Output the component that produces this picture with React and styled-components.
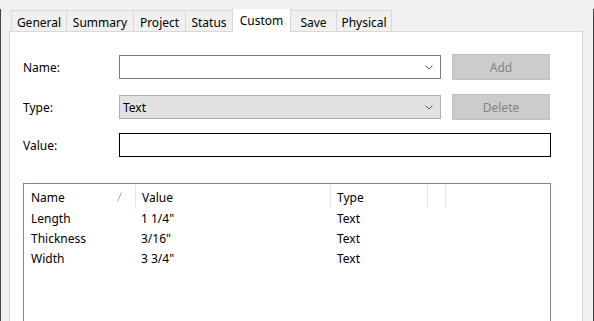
import React from 'react';
import styled, { createGlobalStyle } from 'styled-components';

const GlobalStyle = createGlobalStyle`
  html, body {
    margin: 0;
    padding: 0;
    background: #f0f0f0;
  }
  body {
    font-family: "Noto Sans", "Open Sans", sans-serif;
    font-size: 12px;
    color: #000;
    overflow: hidden;
  }
`;

const Frame = styled.div`
  box-sizing: border-box;
  width: 594px;
  height: 312px;
  margin-top: 9px;
  padding: 0 10px 0 8px;
  border-left: 1px solid #444;
  border-right: 1px solid #444;
  display: flex;
  flex-direction: column;
  overflow: hidden;
`;

const TabStrip = styled.div`
  display: flex;
  align-items: flex-end;
  height: 23px;
  margin-top: -1px;
  padding-left: 2px;
  flex-shrink: 0;
`;

const Tab = styled.div`
  box-sizing: border-box;
  width: ${p => p.w}px;
  height: ${p => (p.active ? 24 : 21)}px;
  margin-left: -1px;
  margin-bottom: ${p => (p.active ? -1 : 0)}px;
  padding-top: 4px;
  line-height: 16px;
  text-align: center;
  border: 1px solid #d9d9d9;
  border-bottom: none;
  background: ${p => (p.active ? '#fff' : '#f0f0f0')};
  position: relative;
  z-index: ${p => (p.active ? 2 : 0)};
  &:first-child {
    margin-left: 0;
  }
`;

const Panel = styled.div`
  flex: 1;
  display: flex;
  flex-direction: column;
  background: #fff;
  border: 1px solid #d9d9d9;
  padding: 22px 0 0 13px;
  position: relative;
  z-index: 1;
`;

const Row = styled.div`
  display: flex;
  align-items: center;
  height: 26px;
  margin-top: ${p => p.mt || 0}px;
`;

const Label = styled.div`
  width: 96px;
  line-height: 16px;
  padding-top: 2px;
`;

const Combo = styled.div`
  box-sizing: border-box;
  width: 322px;
  height: 24px;
  display: flex;
  align-items: center;
  padding: 0 7px 0 3px;
  border: 1px solid ${p => (p.filled ? '#adadad' : '#7a7a7a')};
  background: ${p => (p.filled ? '#e1e1e1' : '#fff')};
  line-height: 16px;
  span {
    flex: 1;
    padding-top: 2px;
  }
`;

const Button = styled.div`
  box-sizing: border-box;
  width: 98px;
  height: 26px;
  margin-left: 11px;
  padding-top: 1px;
  display: flex;
  align-items: center;
  justify-content: center;
  background: #cccccc;
  border: 1px solid #bfbfbf;
  color: #838383;
`;

const TextBox = styled.div`
  box-sizing: border-box;
  width: 432px;
  height: 24px;
  border: 1px solid #000;
  background: #fff;
`;

const ListView = styled.div`
  box-sizing: border-box;
  width: 528px;
  height: 200px;
  margin-top: 25px;
  border: 1px solid #828790;
  background: #fff;
`;

const cols = '112px 195px 97px 18px 1fr';

const Header = styled.div`
  display: grid;
  grid-template-columns: ${cols};
  height: 24px;
`;

const HeadCell = styled.div`
  box-sizing: border-box;
  padding: 6px 0 0 ${p => p.pl || 6}px;
  border-right: ${p => (p.last ? 'none' : '1px solid #e5e5e5')};
  line-height: 16px;
  position: relative;
`;

const SortMark = styled.svg`
  position: absolute;
  right: 13px;
  top: 8px;
`;

const ItemRow = styled.div`
  display: grid;
  grid-template-columns: ${cols};
  height: 20px;
  align-items: center;
  line-height: 16px;
  &:first-of-type {
    margin-top: 2px;
  }
`;

const Cell = styled.div`
  padding: 1px 0 0 ${p => p.pl || 6}px;
`;

const Chevron = () => (
  <svg width="8" height="5" viewBox="0 0 8 5">
    <path d="M0.5 0.5 L4 4 L7.5 0.5" fill="none" stroke="#5a5a5a" strokeWidth="1" />
  </svg>
);

const tabs = [
  ['General', 56],
  ['Summary', 68],
  ['Project', 53],
  ['Status', 48],
  ['Custom', 59],
  ['Save', 47],
  ['Physical', 56],
];

const items = [
  ['Length', '1 1/4"', 'Text'],
  ['Thickness', '3/16"', 'Text'],
  ['Width', '3 3/4"', 'Text'],
];

export default function App() {
  return (
    <>
      <GlobalStyle />
      <Frame>
        <TabStrip>
          {tabs.map(([name, w]) => (
            <Tab key={name} w={w} active={name === 'Custom'}>
              {name}
            </Tab>
          ))}
        </TabStrip>
        <Panel>
          <Row>
            <Label>Name:</Label>
            <Combo>
              <span />
              <Chevron />
            </Combo>
            <Button>Add</Button>
          </Row>
          <Row mt={14}>
            <Label>Type:</Label>
            <Combo filled>
              <span>Text</span>
              <Chevron />
            </Combo>
            <Button>Delete</Button>
          </Row>
          <Row mt={12}>
            <Label>Value:</Label>
            <TextBox />
          </Row>
          <ListView>
            <Header>
              <HeadCell pl={7}>
                Name
                <SortMark width="5" height="10" viewBox="0 0 5 10">
                  <path d="M4.5 0.5 L0.5 9.5" stroke="#a8a8a8" strokeWidth="1" fill="none" />
                </SortMark>
              </HeadCell>
              <HeadCell>Value</HeadCell>
              <HeadCell>Type</HeadCell>
              <HeadCell />
              <HeadCell last />
            </Header>
            {items.map(([n, v, t]) => (
              <ItemRow key={n}>
                <Cell pl={7}>{n}</Cell>
                <Cell pl={5}>{v}</Cell>
                <Cell>{t}</Cell>
              </ItemRow>
            ))}
          </ListView>
        </Panel>
      </Frame>
    </>
  );
}
